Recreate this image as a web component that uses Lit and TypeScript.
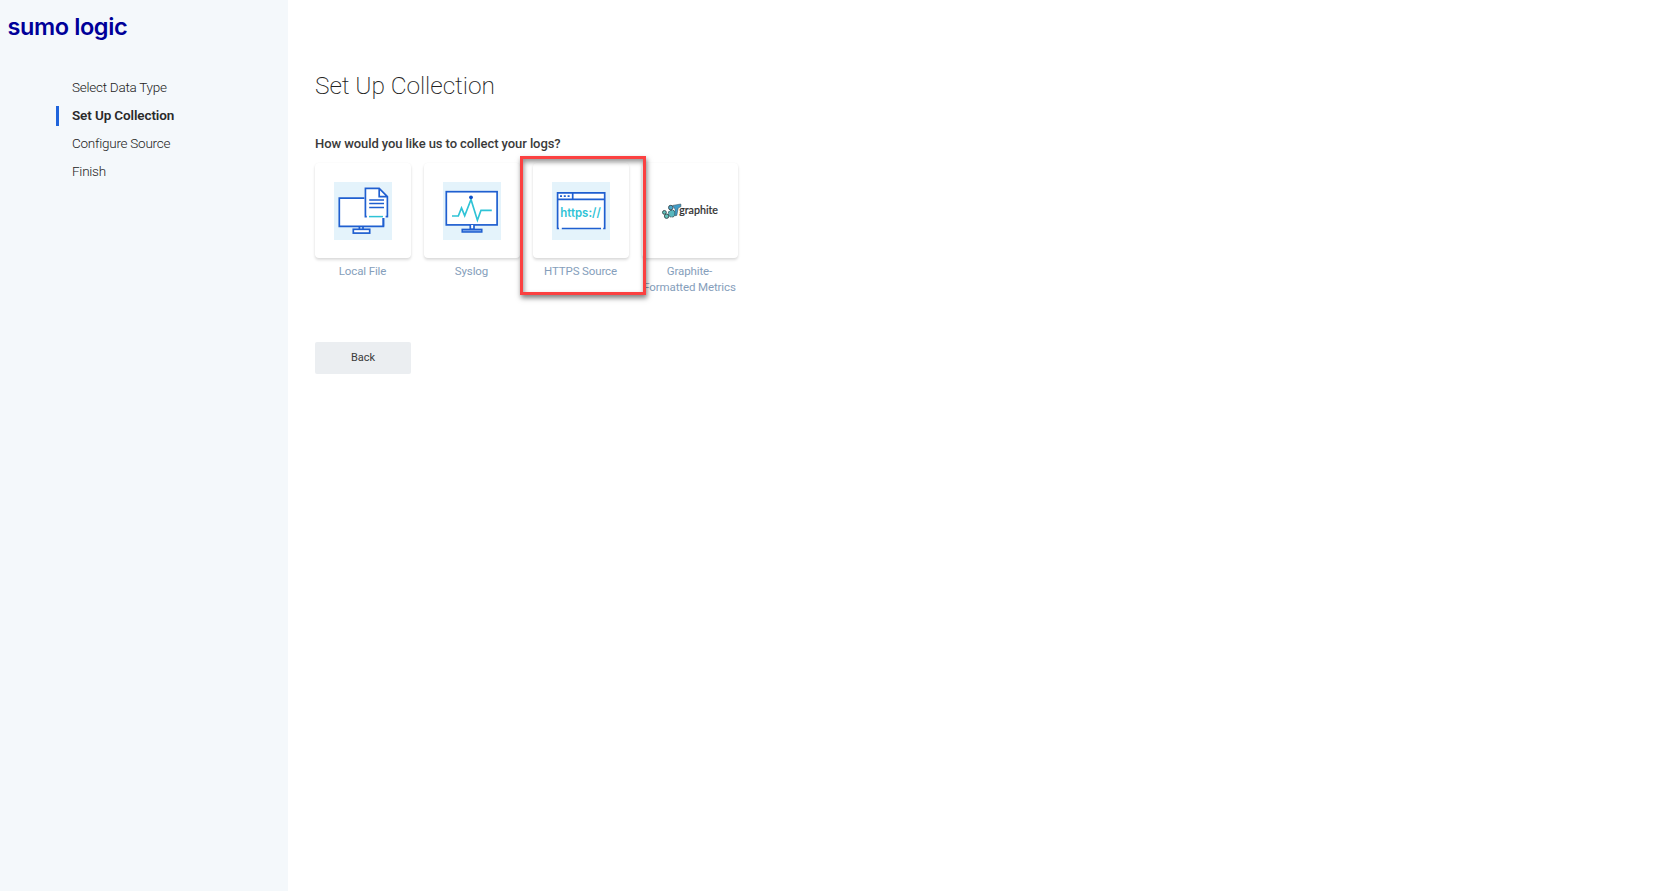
import { LitElement, html, css, svg } from "lit";
import { customElement } from "lit/decorators.js";

const localFile = svg`
  <rect width="58" height="58" fill="#e4f3fb"/>
  <g fill="#fff" stroke="#1f5fd0" stroke-width="1.7">
    <path d="M5.3 16.2H49.4V44.4H5.3Z"/>
    <path d="M25.4 44.6V47.5M29 44.6V47.5" />
    <rect x="19.3" y="47.3" width="16.4" height="3.8"/>
    <path stroke="none" d="M30.4 5.4H46L54.4 14.4V36H30.4Z"/>
    <path d="M32.8 34.6H31.4V6.3H45.2L53.4 14.7V34.6H51.6M45.2 6.3V14.7H53.4" />
    <path d="M49.4 36V44.4"/>
    <path d="M35.2 18.1H50M35.2 21.4H50M35.2 25.4H50" stroke-width="1.5"/>
    <path d="M35 34.6H49" stroke="#2fc3d6" stroke-width="1.5"/>
  </g>`;

const syslog = svg`
  <rect width="58" height="58" fill="#e4f3fb"/>
  <g fill="#fff" stroke="#1f5fd0" stroke-width="1.7">
    <rect x="3.3" y="9.7" width="50.8" height="33.2"/>
    <path d="M27.3 43V47.3H31V43"/>
    <rect x="19.2" y="47.4" width="19.6" height="2.6" fill="#7ea6ea" stroke-width="1.5"/>
    <path fill="none" stroke="#2fc3d6" d="M9 34H15.3L18.5 26L21.7 33.7L28 17.5L34.4 38.2L38 28.3H48.8"/>
    <circle cx="28" cy="15.3" r="1.9" fill="#0d4fc8" stroke="none"/>
  </g>`;

const https = svg`
  <rect width="58" height="58" fill="#e4f3fb"/>
  <rect x="5" y="10.6" width="48.2" height="36" fill="#fff"/>
  <g fill="none" stroke="#1f5fd0" stroke-width="1.7">
    <path d="M7 46.5H5.6V10.9H52.7V46.5H51.2M9.8 46.5H49M5.6 17.3H52.7M20.7 10.9V17.3"/>
    <path d="M8 14.1H18" stroke-dasharray="2 1.8"/>
  </g>
  <text x="8.2" y="34.6" class="https" textLength="40.6" lengthAdjust="spacingAndGlyphs">https://</text>`;

const graphite = svg`
  <g stroke="#34454c" stroke-width=".9">
    <circle cx="3.4" cy="30.4" r="1.9" fill="#63c3ba"/>
    <circle cx="5.6" cy="34.2" r="2.2" fill="#63c3ba"/>
    <circle cx="10.8" cy="31.6" r="3.5" fill="#58b7bd" stroke-dasharray="2 .9"/>
    <circle cx="9.8" cy="25.6" r="2.3" fill="#4aa5c7"/>
    <path d="M11.8 23.4L19.8 22L20 24.6L17.2 26L15.8 33.4L13.8 33.8L14 27.2Z" fill="#3f9cc8" stroke-width=".5"/>
  </g>
  <text x="18.2" y="32.3" class="graphite" textLength="38.8" lengthAdjust="spacingAndGlyphs">graphite</text>`;

const sources = [
  { label: "Local File", icon: localFile },
  { label: "Syslog", icon: syslog },
  { label: "HTTPS Source", icon: https, marked: true },
  { label: "Graphite-\nFormatted Metrics", icon: graphite },
];

@customElement("app-root")
export class AppRoot extends LitElement {
  static styles = css`
    :host { display: flex; height: 891px; background: #fff; color: #3a3a3a; font-family: Roboto, sans-serif; }
    aside { width: 288px; box-sizing: border-box; background: #f4f8fb; padding-top: 11px; }
    .logo { margin-left: 7.5px; height: 32px; font: 600 23.5px/32px Inter, sans-serif; letter-spacing: -.4px; color: #000099; white-space: nowrap; }
    nav { margin: 31px 0 0 56px; display: flex; flex-direction: column; }
    .step { height: 28px; display: flex; align-items: center; font-size: 13.5px; line-height: 16px; font-weight: 300; letter-spacing: -.25px; color: #222; }
    .step::before { content: ""; width: 3px; height: 20px; margin-right: 13px; }
    .text { padding-bottom: 2px; }
    .current { font-weight: 600; letter-spacing: -.12px; color: #2a2a2a; }
    .current::before { background: #1f64dc; }
    main { padding: 70px 0 0 27px; }
    h1 { margin: 0; font-size: 24.5px; font-weight: 200; line-height: 32px; letter-spacing: -.09px; color: #222; }
    h2 { margin: 33px 0 0; font-size: 13px; font-weight: 500; line-height: 18px; letter-spacing: -.08px; }
    .sources { display: flex; gap: 13px; margin-top: 10px; height: 179px; }
    .source { position: relative; width: 96px; }
    .card { height: 95px; display: flex; align-items: center; justify-content: center; border-radius: 4px; background: #fff; box-shadow: 0 2px 3px rgba(0,0,0,.14), 0 0 2px rgba(0,0,0,.04); }
    .card svg { width: 58px; height: 58px; overflow: visible; }
    .label { margin: 5px -5px 0 -6px; text-align: center; white-space: pre; font-size: 11.5px; line-height: 16px; letter-spacing: -.12px; color: #859ebb; }
    .marked { z-index: 1; }
    .marked::after { content: ""; position: absolute; left: -13px; top: -7px; width: 120px; height: 133px; border: 3px solid #fb4141; box-shadow: 1px 3px 5px rgba(0,0,0,.5), inset 1px 3px 5px rgba(0,0,0,.42); }
    .back { width: 96px; height: 32px; padding: 0 0 2px; border: 0; border-radius: 2px; background: #ebeef1; color: #3a3a3a; font: 400 11px Roboto, sans-serif; display: block; }
    .https { font: 600 12.5px Inter, sans-serif; fill: #2fc3d6; }
    .graphite { font: 500 12px Lato, sans-serif; fill: #303030; stroke: #303030; stroke-width: .2px; }
  `;

  render() {
    const steps = ["Select Data Type", "Set Up Collection", "Configure Source", "Finish"];
    return html`
      <aside>
        <div class="logo">sumo logic</div>
        <nav>${steps.map((s, i) => html`<div class="step ${i === 1 ? "current" : ""}"><span class="text">${s}</span></div>`)}</nav>
      </aside>
      <main>
        <h1>Set Up Collection</h1>
        <h2>How would you like us to collect your logs?</h2>
        <div class="sources">
          ${sources.map((s) => html`
            <div class="source ${s.marked ? "marked" : ""}">
              <div class="card"><svg viewBox="0 0 58 58">${s.icon}</svg></div>
              <div class="label">${s.label}</div>
            </div>`)}
        </div>
        <button class="back">Back</button>
      </main>`;
  }
}
